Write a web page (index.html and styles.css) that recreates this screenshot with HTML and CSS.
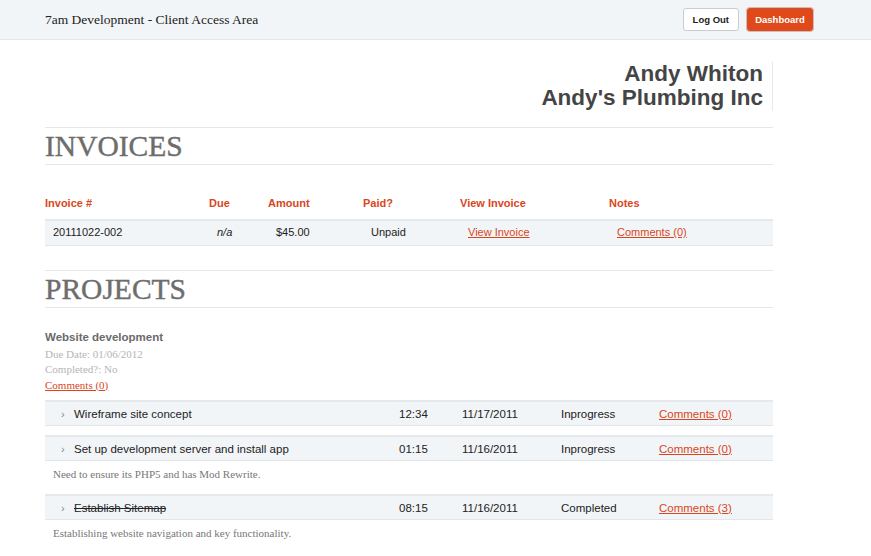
FILE: index.html
```html
<!DOCTYPE html>
<html lang="en">
<head>
    <meta charset="UTF-8">
    <title>7am Development - Client Access Area</title>
    <link rel="stylesheet" href="styles.css">
</head>
<body>
    <div class="topbar">
        <div class="brand">7am Development - Client Access Area</div>
        <div class="actions">
            <a class="btn" href="#">Log Out</a>
            <a class="btn btn-primary" href="#">Dashboard</a>
        </div>
    </div>

    <div class="wrapper">
        <div class="client">
            <div class="client-name">Andy Whiton<br>Andy's Plumbing Inc</div>
        </div>

        <h2 class="section-title">INVOICES</h2>
        <table class="invoices">
            <thead>
                <tr>
                    <th class="c-num">Invoice #</th>
                    <th class="c-due">Due</th>
                    <th class="c-amt">Amount</th>
                    <th class="c-paid">Paid?</th>
                    <th class="c-view">View Invoice</th>
                    <th>Notes</th>
                </tr>
            </thead>
            <tbody>
                <tr>
                    <td>20111022-002</td>
                    <td><em>n/a</em></td>
                    <td>$45.00</td>
                    <td>Unpaid</td>
                    <td><a href="#">View Invoice</a></td>
                    <td><a href="#">Comments (0)</a></td>
                </tr>
            </tbody>
        </table>

        <h2 class="section-title">PROJECTS</h2>
        <div class="project">
            <h3 class="project-name">Website development</h3>
            <p class="meta">Due Date: 01/06/2012</p>
            <p class="meta">Completed?: No</p>
            <p class="meta"><a href="#">Comments (0)</a></p>
        </div>

        <div class="tasks">
            <div class="task">
                <span class="arrow">&rsaquo;</span>
                <span>Wireframe site concept</span>
                <span>12:34</span>
                <span>11/17/2011</span>
                <span>Inprogress</span>
                <a href="#">Comments (0)</a>
            </div>
            <div class="task">
                <span class="arrow">&rsaquo;</span>
                <span>Set up development server and install app</span>
                <span>01:15</span>
                <span>11/16/2011</span>
                <span>Inprogress</span>
                <a href="#">Comments (0)</a>
            </div>
            <p class="task-note">Need to ensure its PHP5 and has Mod Rewrite.</p>
            <div class="task">
                <span class="arrow">&rsaquo;</span>
                <span class="done">Establish Sitemap</span>
                <span>08:15</span>
                <span>11/16/2011</span>
                <span>Completed</span>
                <a href="#">Comments (3)</a>
            </div>
            <p class="task-note">Establishing website navigation and key functionality.</p>
        </div>
    </div>
</body>
</html>
```

FILE: styles.css
```css
*{
    margin: 0;
    padding: 0;
    box-sizing: border-box;
}
body{
    font-family: "Liberation Sans", Arial, sans-serif;
    color: #222;
    background: #fff;
}
a{
    color: #d9461c;
}

/* top bar */
.topbar{
    height: 40px;
    background: #f2f5f8;
    border-bottom: 1px solid #e4e7ea;
    display: flex;
    align-items: center;
    justify-content: space-between;
    padding: 0 58px 0 45px;
}
.brand{
    font-family: "Liberation Serif", serif;
    font-size: 13.5px;
    color: #222;
}
.actions{
    display: flex;
    gap: 8px;
    margin-top: -1px;
}
.btn{
    display: block;
    height: 23px;
    line-height: 21px;
    padding: 0 9px;
    font-size: 9.5px;
    font-weight: bold;
    color: #222;
    text-decoration: none;
    background: #fff;
    border: 1px solid #c9ccd0;
    border-radius: 3px;
}
.btn-primary{
    width: 66px;
    text-align: center;
    padding: 0;
    color: #fff;
    background: #e04a1a;
    border-color: #c4543a;
    box-shadow: 0 0 0 1px #e8b4a6;
}

.wrapper{
    width: 728px;
    margin-left: 45px;
}

/* client block */
.client{
    display: flex;
    justify-content: flex-end;
    margin-top: 22px;
}
.client-name{
    text-align: right;
    font-size: 22.5px;
    line-height: 24px;
    font-weight: bold;
    color: #444;
    padding-right: 9px;
    border-right: 1px solid #e8e8e8;
    padding-bottom: 1px;
}

.section-title{
    font-family: "Liberation Serif", serif;
    font-weight: normal;
    font-size: 29.5px;
    line-height: 36px;
    color: #6d6d6d;
    -webkit-text-stroke: 0.4px #6d6d6d;
    border-top: 1px solid #e6e6e6;
    border-bottom: 1px solid #e6e6e6;
    margin-top: 16px;
}

/* invoices */
.invoices{
    width: 100%;
    border-collapse: collapse;
    margin-top: 32px;
    font-size: 11px;
}
.invoices th{
    text-align: left;
    color: #d9461c;
    font-size: 11px;
    padding: 0 0 10px 0;
}
.invoices td{
    background: #f2f5f8;
    border-top: 2px solid #e6e9ec;
    border-bottom: 1px solid #e3e6e9;
    padding: 4px 8px 5px 8px;
    height: 25px;
}
.c-num{ width: 164px; }
.c-due{ width: 59px; }
.c-amt{ width: 95px; }
.c-paid{ width: 97px; }
.c-view{ width: 149px; }

.invoices + .section-title{
    margin-top: 24px;
}

/* project */
.project{
    margin-top: 23px;
}
.project-name{
    font-size: 11.5px;
    color: #6a6a6a;
    margin-bottom: 4px;
}
.meta{
    font-family: "Liberation Serif", serif;
    font-size: 11px;
    line-height: 15.5px;
    color: #b5b5b5;
}

.tasks{
    margin-top: 7px;
}
.task{
    display: grid;
    grid-template-columns: 29px 325px 63px 99px 98px 1fr;
    align-items: center;
    height: 26px;
    background: #f2f5f8;
    border-top: 2px solid #e6e9ec;
    border-bottom: 1px solid #e3e6e9;
    font-size: 11.5px;
    color: #222;
    margin-bottom: 9px;
}
.arrow{
    padding-left: 16px;
    color: #888;
    font-size: 11px;
}
.done{
    text-decoration: line-through;
}
.task-note{
    font-family: "Liberation Serif", serif;
    font-size: 11px;
    color: #777;
    padding-left: 8px;
    margin: -1px 0 14px 0;
    line-height: 11px;
}
```
